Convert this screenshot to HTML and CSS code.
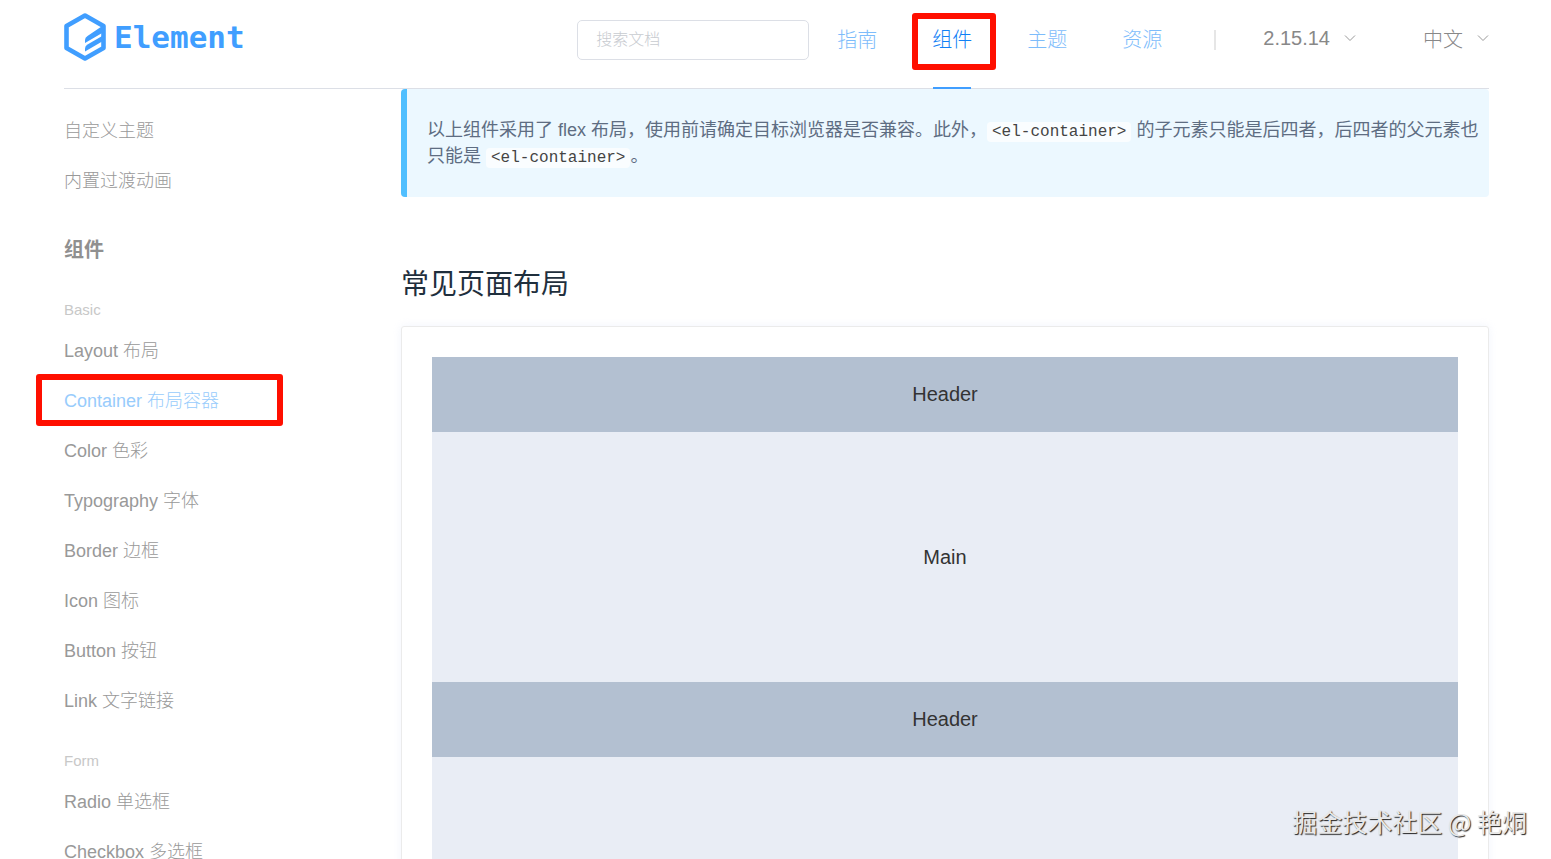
FILE: index.html
```html
<!DOCTYPE html>
<html lang="zh-CN">
<head>
  <meta charset="UTF-8">
  <meta name="viewport" content="width=device-width, initial-scale=1.0">
  <title>Element</title>
  <link rel="stylesheet" href="styles.css">
</head>
<body>

  <header class="header">
    <a class="logo" href="#">
      <svg class="logo-icon" viewBox="0 0 42 48">
        <path d="M21 2.5 L39.5 13 V35 L21 45.5 L2.5 35 V13 Z" fill="none" stroke="#409eff" stroke-width="4.6" stroke-linejoin="round"/>
        <path d="M39 12.5 V19.5 L21 30 V27 Q21 24.5 23.5 23 Z" fill="#409eff"/>
        <path d="M21 38.5 V35.5 Q21 33 23.5 31.5 L39 22.5 V28 Z" fill="#409eff"/>
      </svg>
      <span>Element</span>
    </a>
    <input class="search" type="text" placeholder="搜索文档" aria-label="搜索文档">
    <nav class="nav">
      <a href="#">指南</a>
      <a class="active" href="#">组件</a>
      <a href="#">主题</a>
      <a href="#">资源</a>
    </nav>
    <div class="divider"></div>
    <div class="options">
      <button type="button">2.15.14
        <svg class="arrow" viewBox="0 0 12 12"><path d="M1 3.5 L6 8.5 L11 3.5" fill="none" stroke="#999"/></svg>
      </button>
      <button type="button">中文
        <svg class="arrow" viewBox="0 0 12 12"><path d="M1 3.5 L6 8.5 L11 3.5" fill="none" stroke="#999"/></svg>
      </button>
    </div>
  </header>

  <div class="page">
    <aside class="sidebar">
      <a href="#">自定义主题</a>
      <a href="#">内置过渡动画</a>
      <h2>组件</h2>
      <h3>Basic</h3>
      <a href="#">Layout 布局</a>
      <a class="active" href="#">Container 布局容器</a>
      <a href="#">Color 色彩</a>
      <a href="#">Typography 字体</a>
      <a href="#">Border 边框</a>
      <a href="#">Icon 图标</a>
      <a href="#">Button 按钮</a>
      <a href="#">Link 文字链接</a>
      <h3>Form</h3>
      <a href="#">Radio 单选框</a>
      <a href="#">Checkbox 多选框</a>
    </aside>

    <main class="content">
      <p class="tip">以上组件采用了 flex 布局，使用前请确定目标浏览器是否兼容。此外，<code>&lt;el-container&gt;</code> 的子元素只能是后四者，后四者的父元素也只能是 <code>&lt;el-container&gt;</code>。</p>
      <h1>常见页面布局</h1>
      <div class="demo">
        <div class="el-header">Header</div>
        <div class="el-main">Main</div>
        <div class="el-header">Header</div>
        <div class="el-main"></div>
      </div>
    </main>
  </div>

  <div class="watermark">掘金技术社区 @ 艳烔</div>

</body>
</html>
```
FILE: styles.css
```css
*,
*::before,
*::after {
  box-sizing: border-box;
}
body {
  margin: 0;
  height: 100vh;
  overflow: hidden;
  display: flex;
  flex-direction: column;
  background-color: #fff;
  font-family: "Liberation Sans", "Noto Sans CJK SC", sans-serif;
  font-weight: 300;
}
a {
  text-decoration: none;
}
.header {
  flex: none;
  display: flex;
  align-items: center;
  height: 89px;
  margin: 0 62px 0 64px;
  padding-bottom: 8px;
  border-bottom: 1px solid #dcdfe6;
}
.logo {
  display: flex;
  align-items: center;
  gap: 8px;
  margin-right: auto;
  margin-bottom: 6px;
  color: #409eff;
  font-family: "DejaVu Sans Mono", monospace;
  font-size: 31px;
  font-weight: bold;
}
.logo-icon {
  width: 42px;
  height: 48px;
}
.search {
  width: 232px;
  height: 40px;
  margin-right: 28px;
  padding: 0 18px;
  border: 1px solid #dcdfe6;
  border-radius: 5px;
  font-family: inherit;
  font-size: 16px;
  font-weight: 300;
}
.search::placeholder {
  color: #c8cbd0;
}
.nav {
  display: flex;
  gap: 55px;
  font-size: 20px;
  line-height: 80px;
}
.nav a {
  position: relative;
  color: #7dbcfb;
}
.nav a.active {
  color: #1080f5;
}
.nav a.active::before {
  content: "";
  position: absolute;
  left: -20px;
  top: 13px;
  width: 84px;
  height: 57px;
  border: 6px solid #ff0f00;
  border-radius: 3px;
}
.nav a.active::after {
  content: "";
  position: absolute;
  left: 1px;
  right: 1px;
  bottom: -9px;
  height: 2px;
  background-color: #409eff;
}
.divider {
  width: 2px;
  height: 20px;
  margin: 0 47px 0 52px;
  background-color: #e6e6e6;
}
.options {
  display: flex;
  gap: 67px;
  margin-bottom: 4px;
}
.options button {
  display: flex;
  align-items: center;
  gap: 14px;
  padding: 0;
  border: none;
  background: none;
  color: #888;
  font-family: inherit;
  font-size: 20px;
  font-weight: 300;
}
.arrow {
  width: 12px;
  height: 12px;
}
.page {
  flex: 1;
  min-height: 0;
  display: flex;
  overflow: hidden;
  padding: 0 62px 0 64px;
}
.sidebar {
  flex: none;
  width: 337px;
  padding-top: 17px;
}
.sidebar a {
  display: block;
  position: relative;
  color: #999;
  font-size: 18px;
  line-height: 50px;
}
.sidebar a.active {
  color: #98ccfc;
}
.sidebar a.active::before {
  content: "";
  position: absolute;
  left: -28px;
  top: -2px;
  width: 247px;
  height: 52px;
  border: 6px solid #ff0f00;
  border-radius: 3px;
}
.sidebar h2 {
  margin: 19px 0 0;
  color: #909090;
  font-size: 20px;
  font-weight: bold;
  line-height: 50px;
}
.sidebar h3 {
  margin: 19px 0 0;
  color: #c8c8c8;
  font-size: 15px;
  font-weight: 300;
  line-height: 32px;
}
.content {
  flex: 1;
  min-width: 0;
}
.tip {
  margin: 0;
  padding: 28px 4px 28px 20px;
  border-left: 6px solid #50bfff;
  border-radius: 4px;
  background-color: #ecf8ff;
  color: #5e6d82;
  font-size: 18px;
  font-weight: normal;
  line-height: 26px;
}
.tip code {
  padding: 1px 5px;
  border-radius: 4px;
  background-color: #fafdff;
  color: #444;
  font-family: "Liberation Mono", monospace;
  font-size: 16px;
  line-height: 18px;
}
.content h1 {
  margin: 68px 0 21px;
  color: #1f2f3d;
  font-size: 28px;
  font-weight: normal;
  line-height: 40px;
}
.demo {
  padding: 30px;
  border: 1px solid #ebebeb;
  border-radius: 3px;
  box-shadow: 0 0 8px rgba(232, 237, 250, 0.6);
  color: #333;
  font-size: 20px;
  text-align: center;
}
.el-header {
  background-color: #b3c0d1;
  line-height: 75px;
}
.el-main {
  height: 250px;
  background-color: #e9edf5;
  line-height: 250px;
}
.watermark {
  position: absolute;
  right: 24px;
  bottom: 20px;
  color: #e8e8e8;
  font-family: "Noto Sans CJK SC", sans-serif;
  font-size: 25px;
  font-weight: normal;
  line-height: 36px;
  text-shadow: 1px 1px 1px #222;
}
```
